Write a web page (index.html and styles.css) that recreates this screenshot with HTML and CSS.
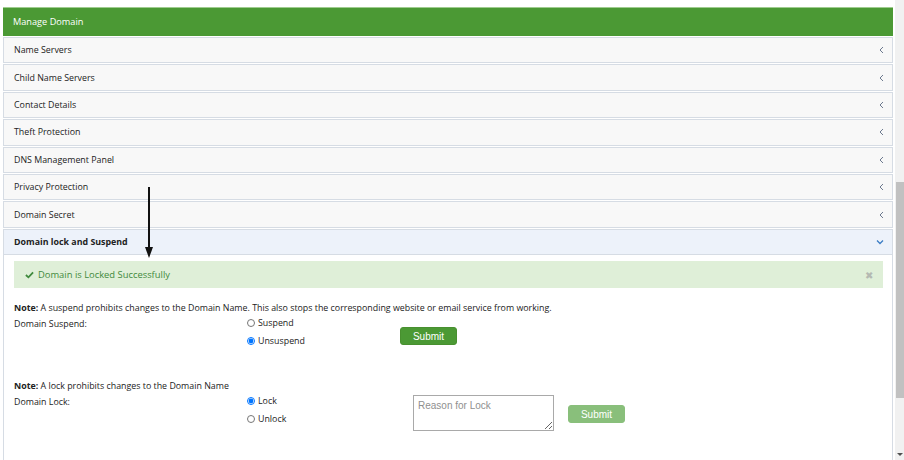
FILE: index.html
```html
<!DOCTYPE html>
<html lang="en">
<head>
    <meta charset="UTF-8">
    <title>Manage Domain</title>
    <link rel="stylesheet" href="styles.css">
</head>
<body>
    <div class="page">
        <div class="panel">
            <div class="panel-head">Manage Domain</div>

            <div class="acc-row"><span>Name Servers</span><svg class="chev" viewBox="0 0 6 8"><path d="M5 1 L2 4 L5 7" /></svg></div>
            <div class="acc-row"><span>Child Name Servers</span><svg class="chev" viewBox="0 0 6 8"><path d="M5 1 L2 4 L5 7" /></svg></div>
            <div class="acc-row"><span>Contact Details</span><svg class="chev" viewBox="0 0 6 8"><path d="M5 1 L2 4 L5 7" /></svg></div>
            <div class="acc-row"><span>Theft Protection</span><svg class="chev" viewBox="0 0 6 8"><path d="M5 1 L2 4 L5 7" /></svg></div>
            <div class="acc-row"><span>DNS Management Panel</span><svg class="chev" viewBox="0 0 6 8"><path d="M5 1 L2 4 L5 7" /></svg></div>
            <div class="acc-row"><span>Privacy Protection</span><svg class="chev" viewBox="0 0 6 8"><path d="M5 1 L2 4 L5 7" /></svg></div>
            <div class="acc-row"><span>Domain Secret</span><svg class="chev" viewBox="0 0 6 8"><path d="M5 1 L2 4 L5 7" /></svg></div>
            <div class="acc-row active"><span>Domain lock and Suspend</span><svg class="chev down" viewBox="0 0 8 6"><path d="M1 1.5 L4 4.5 L7 1.5" /></svg></div>

            <div class="panel-body">
                <div class="alert">
                    <svg class="check" viewBox="0 0 10 8"><path d="M1 4 L3.8 6.6 L9 1.2" /></svg>
                    <span>Domain is Locked Successfully</span>
                    <span class="close">&#x2716;</span>
                </div>

                <p class="note"><b>Note:</b> A suspend prohibits changes to the Domain Name. This also stops the corresponding website or email service from working.</p>
                <div class="form-row">
                    <div class="label">Domain Suspend:</div>
                    <div class="radios">
                        <label><input type="radio" name="suspend"> Suspend</label>
                        <label><input type="radio" name="suspend" checked> Unsuspend</label>
                    </div>
                    <button class="btn suspend-btn">Submit</button>
                </div>

                <p class="note lock-note"><b>Note:</b> A lock prohibits changes to the Domain Name</p>
                <div class="form-row">
                    <div class="label">Domain Lock:</div>
                    <div class="radios lock-radios">
                        <label><input type="radio" name="lock" checked> Lock</label>
                        <label><input type="radio" name="lock"> Unlock</label>
                    </div>
                    <textarea class="reason" placeholder="Reason for Lock"></textarea>
                    <button class="btn btn-faded">Submit</button>
                </div>
            </div>
        </div>
    </div>
    <div class="scrollbar">
        <div class="thumb"></div>
        <div class="arrow-down"></div>
    </div>

    <div class="pointer">
        <div class="pointer-line"></div>
        <div class="pointer-head"></div>
    </div>
</body>
</html>
```

FILE: styles.css
```css
* {
    box-sizing: border-box;
}

body {
    margin: 0;
    height: 460px;
    display: flex;
    overflow: hidden;
    font-family: 'Open Sans', 'Liberation Sans', sans-serif;
    font-size: 8.85px;
    color: #222;
    background: white;
}

.page {
    flex: 1;
    padding: 7px 2px 0 3px;
}

.panel {
    height: 100%;
    display: flex;
    flex-direction: column;
}

.panel-head {
    height: 29px;
    background: #4b9934;
    border-top: 1px solid #9fcc8f;
    color: white;
    padding: 7px 0 0 10px;
    font-size: 9.2px;
}

.acc-row {
    height: 26.4px;
    margin-top: 1px;
    border: 1px solid #d6dce4;
    background: #f8f8f8;
    display: flex;
    align-items: center;
    justify-content: space-between;
    padding: 0 8px 0 10px;
}

.acc-row:first-of-type {
    margin-top: 0;
}

.acc-row.active {
    background: #edf2fa;
    font-weight: bold;
}

.chev {
    width: 6px;
    height: 8px;
    fill: none;
    stroke: #6d7a8f;
    stroke-width: 1;
}

.chev.down {
    width: 8px;
    height: 6px;
    stroke: #3b7dc4;
    stroke-width: 1.3;
}

.panel-body {
    flex: 1;
    border-left: 1px solid #d6dce4;
    border-right: 1px solid #d6dce4;
    padding: 6px 9px 0 10px;
}

.alert {
    height: 27px;
    background: #dfefd8;
    color: #3f8a3d;
    display: flex;
    align-items: center;
    padding: 0 10px 0 11px;
    font-size: 9.4px;
}

.check {
    width: 9px;
    height: 8px;
    fill: none;
    stroke: #3f8a3d;
    stroke-width: 2;
    margin-right: 4px;
}

.close {
    margin-left: auto;
    color: #b4b9b2;
    font-size: 10px;
}

.note {
    margin: 14px 0 2px;
}

.lock-note {
    margin-top: 32px;
}

.form-row {
    display: flex;
    align-items: flex-start;
}

.label {
    width: 233px;
    padding-top: 2px;
}

.radios {
    width: 153px;
    display: flex;
    flex-direction: column;
    gap: 4px;
}

.radios label {
    display: flex;
    align-items: center;
    height: 14px;
}

.radios input {
    width: 8px;
    height: 8px;
    margin: 0 3px 0 0;
}

.lock-radios {
    width: 166px;
}

.btn {
    font-family: 'Liberation Sans', Arial, sans-serif;
    font-size: 10px;
    color: white;
    background: #4b9934;
    border: 1px solid #48902f;
    border-radius: 3px;
    width: 57px;
    height: 18px;
    padding: 0;
}

.suspend-btn {
    margin-top: 11px;
}

.reason {
    width: 141px;
    height: 36px;
    margin-top: 1px;
    border: 1px solid #a9a9a9;
    font-family: 'Liberation Sans', Arial, sans-serif;
    font-size: 10px;
    padding: 4px 4px;
    resize: vertical;
}

.reason::placeholder {
    color: #8f8f8f;
}

.btn-faded {
    margin: 11px 0 0 14px;
    background: #89bf7b;
    border-color: #89bf7b;
}

.scrollbar {
    width: 9px;
    background: #f1f1f1;
    position: relative;
}

.thumb {
    margin-top: 182px;
    height: 216px;
    background: #c1c1c1;
    margin-left: 1px;
}

.arrow-down {
    position: absolute;
    bottom: 4px;
    left: 2px;
    border-left: 3px solid transparent;
    border-right: 3px solid transparent;
    border-top: 3px solid #505050;
}

.pointer {
    position: absolute;
    left: 144px;
    top: 187px;
    width: 9px;
    display: flex;
    flex-direction: column;
    align-items: center;
}

.pointer-line {
    width: 2px;
    height: 60px;
    background: #111;
}

.pointer-head {
    border-left: 4px solid transparent;
    border-right: 4px solid transparent;
    border-top: 11px solid #111;
}
```
